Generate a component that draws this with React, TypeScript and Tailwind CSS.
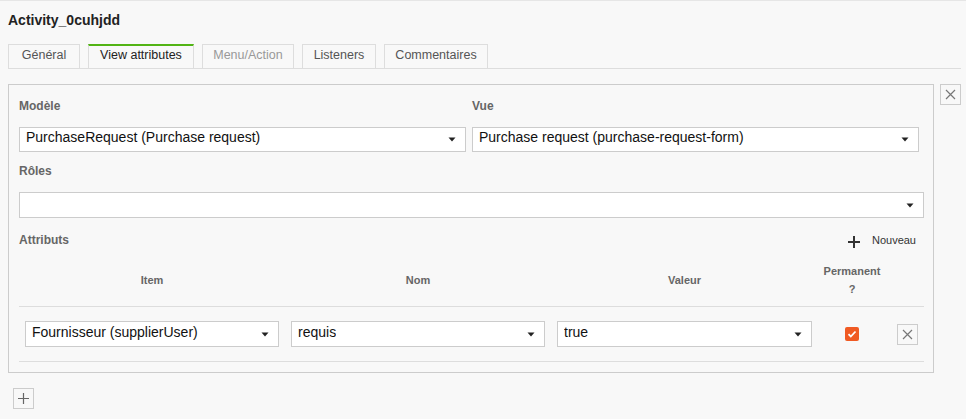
import { useState } from "react";

const tabs = [
  { label: "Général", w: "w-[72px]" },
  { label: "View attributes", w: "w-[106px]", active: true },
  { label: "Menu/Action", w: "w-[92px]", disabled: true },
  { label: "Listeners", w: "w-[74px]" },
  { label: "Commentaires", w: "w-[104px]" },
];

function Caret() {
  return (
    <svg width="8" height="5" viewBox="0 0 8 5" className="shrink-0" aria-hidden="true">
      <path d="M0.5 0.5h7L4 4.5z" fill="#222" />
    </svg>
  );
}

function Select({ value, className = "" }: { value: string; className?: string }) {
  return (
    <div
      className={`flex items-center justify-between bg-white border border-[#ccc] pl-[6px] pr-[9px] text-[14px] text-[#111] ${className}`}
    >
      <span className="truncate leading-[16px] -mt-[5px]">{value}</span>
      <Caret />
    </div>
  );
}

function CloseButton({ className = "" }: { className?: string }) {
  return (
    <button
      type="button"
      className={`shrink-0 w-[21px] h-[21px] flex items-center justify-center border border-[#ccc] bg-[#f8f8f8] ${className}`}
      aria-label="Supprimer"
    >
      <svg width="11" height="11" viewBox="0 0 11 11" aria-hidden="true">
        <path d="M1 1l9 9M10 1l-9 9" stroke="#777" strokeWidth="1.2" />
      </svg>
    </button>
  );
}

export default function App() {
  const [permanent, setPermanent] = useState(true);

  return (
    <div
      className="min-h-[419px] w-full bg-[#f8f8f8] border-t border-[#e6e6e6] text-[#333] overflow-hidden"
      style={{ fontFamily: '"Liberation Sans", Arial, sans-serif' }}
    >
      <div className="px-2">
        <h1 className="pt-[11px] text-[14px] font-bold leading-[17px] text-[#222]">Activity_0cuhjdd</h1>

        {/* Tabs */}
        <div className="mt-[15px] flex gap-2 border-b border-[#ddd] w-[953px]">
          {tabs.map((t) => (
            <div
              key={t.label}
              className={`${t.w} h-[24px] pb-[3px] flex items-center justify-center text-[12.5px] border-x border-[#ddd] ${
                t.active ? "border-t-2 border-t-[#52b415] text-[#222]" : "border-t text-[#555]"
              } ${t.disabled ? "text-[#999]" : ""}`}
            >
              {t.label}
            </div>
          ))}
        </div>

        <div className="mt-[15px] flex items-start gap-[6px] w-[953px]">
          {/* Panel */}
          <div className="shrink-0 w-[926px] border border-[#ccc] pl-[10px] pr-[9px] pb-[10px]">
            <div className="flex gap-[6px]">
              <div className="w-[447px]">
                <div className="pt-[12px] h-[42px] text-[12px] font-bold text-[#666]">Modèle</div>
                <Select value="PurchaseRequest (Purchase request)" className="h-[25px]" />
              </div>
              <div className="w-[447px]">
                <div className="pt-[12px] h-[42px] text-[12px] font-bold text-[#666]">Vue</div>
                <Select value="Purchase request (purchase-request-form)" className="h-[25px]" />
              </div>
            </div>

            <div className="pt-[10px] h-[40px] text-[12px] font-bold text-[#666]">Rôles</div>
            <Select value="" className="h-[26px]" />

            <div className="mt-[14px] flex items-center justify-between h-[16px]">
              <span className="text-[12px] font-bold text-[#666]">Attributs</span>
              <button type="button" className="flex items-center gap-[12px] pr-[8px] text-[11px] text-[#333]">
                <svg width="12" height="12" viewBox="0 0 12 12" aria-hidden="true" className="mt-[4px]">
                  <path d="M6 0v12M0 6h12" stroke="#333" strokeWidth="2" />
                </svg>
                Nouveau
              </button>
            </div>

            {/* Attribute table */}
            <div className="mt-[6px] grid grid-cols-[266px_266px_267px_68px_1fr] items-center h-[53px] border-b border-[#ddd] text-[11px] font-bold text-[#666]">
              <div className="text-center">Item</div>
              <div className="text-center">Nom</div>
              <div className="text-center">Valeur</div>
              <div className="text-center leading-[18px]">
                Permanent
                <br />?
              </div>
              <div />
            </div>
            <div className="grid grid-cols-[266px_266px_267px_68px_1fr] items-center h-[55px] border-b border-[#ddd]">
              <div className="px-[6px]">
                <Select value="Fournisseur (supplierUser)" className="h-[26px]" />
              </div>
              <div className="px-[6px]">
                <Select value="requis" className="h-[26px]" />
              </div>
              <div className="px-[6px]">
                <Select value="true" className="h-[26px]" />
              </div>
              <div className="flex justify-center">
                <button
                  type="button"
                  onClick={() => setPermanent(!permanent)}
                  className={`w-[14px] h-[14px] rounded-[2px] flex items-center justify-center ${
                    permanent ? "bg-[#f05a23]" : "bg-white border border-[#ccc]"
                  }`}
                  aria-label="Permanent"
                >
                  {permanent && (
                    <svg width="10" height="10" viewBox="0 0 10 10" aria-hidden="true">
                      <path d="M1.5 5.2l2.3 2.3L8.5 2.5" stroke="#fff" strokeWidth="1.8" fill="none" />
                    </svg>
                  )}
                </button>
              </div>
              <div className="flex justify-center pl-[4px]">
                <CloseButton />
              </div>
            </div>
          </div>

          <CloseButton />
        </div>

        <button
          type="button"
          className="mt-[15px] ml-[5px] w-[21px] h-[21px] flex items-center justify-center border border-[#ccc]"
          aria-label="Ajouter"
        >
          <svg width="11" height="11" viewBox="0 0 11 11" aria-hidden="true">
            <path d="M5.5 0v11M0 5.5h11" stroke="#666" strokeWidth="1.2" />
          </svg>
        </button>
      </div>
    </div>
  );
}
